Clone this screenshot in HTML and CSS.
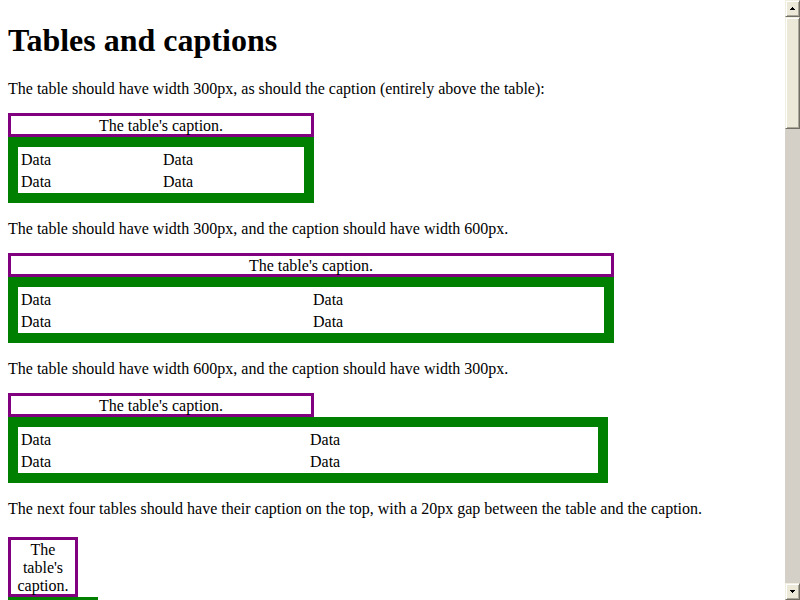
FILE: index.html
```html
<!DOCTYPE html>
<html lang="en">
<head>
<meta charset="utf-8">
<title>Tables and captions</title>
<link rel="stylesheet" href="styles.css">
</head>
<body>
<main class="page">
  <h1>Tables and captions</h1>

  <p>The table should have width 300px, as should the caption (entirely above the table):</p>
  <table class="narrow">
    <caption class="caption-300">The table's caption.</caption>
    <tr><td>Data</td><td>Data</td></tr>
    <tr><td>Data</td><td>Data</td></tr>
  </table>

  <p>The table should have width 300px, and the caption should have width 600px.</p>
  <table class="stretched">
    <caption class="caption-600">The table's caption.</caption>
    <tr><td>Data</td><td>Data</td></tr>
    <tr><td>Data</td><td>Data</td></tr>
  </table>

  <p>The table should have width 600px, and the caption should have width 300px.</p>
  <table class="wide">
    <caption class="caption-300">The table's caption.</caption>
    <tr><td>Data</td><td>Data</td></tr>
    <tr><td>Data</td><td>Data</td></tr>
  </table>

  <p>The next four tables should have their caption on the top, with a 20px gap between the table and the caption.</p>
  <table class="spaced">
    <caption class="caption-small">The table's caption.</caption>
    <tr><td></td><td></td></tr>
    <tr><td></td><td></td></tr>
  </table>
</main>
<div class="scrollbar">
  <button class="arrow" type="button" aria-label="Scroll up">
    <svg width="5" height="3" viewBox="0 0 5 3" shape-rendering="crispEdges"><path d="M2 0h1v1h1v1h1v1H0V2h1V1h1z"/></svg>
  </button>
  <div class="thumb"></div>
  <div class="track"></div>
  <button class="arrow" type="button" aria-label="Scroll down">
    <svg width="5" height="3" viewBox="0 0 5 3" shape-rendering="crispEdges"><path d="M0 0h5v1H4v1H3v1H2V2H1V1H0z"/></svg>
  </button>
</div>
</body>
</html>
```
FILE: styles.css
```css
body {
  display: flex;
  height: 100vh;
  margin: 0;
  overflow: hidden;
  background: #fff;
  color: #000;
  font: 16px/18px "Liberation Serif", "Times New Roman", serif;
}

.page {
  flex: 1;
  min-width: 0;
  padding: 0 8px;
  overflow: hidden;
}

h1 {
  margin: 22px 0 21px;
  font-size: 32px;
  line-height: 37px;
}

p {
  margin: 17px 0 15px;
}

table {
  border: 10px solid green;
  border-spacing: 2px;
}

td {
  padding: 2px 1px 0;
}

caption {
  box-sizing: content-box;
  height: 17px;
  padding-top: 1px;
  border: 3px solid purple;
  text-align: center;
}

.narrow {
  width: 306px;
}

.stretched {
  width: 606px;
}

.wide {
  width: 600px;
}

.spaced {
  width: 90px;
  margin: 19px 0;
}

.caption-300 {
  width: 300px;
}

.caption-600 {
  width: 600px;
}

.caption-small {
  width: 64px;
  height: 53px;
}

.scrollbar {
  display: flex;
  flex-direction: column;
  width: 15px;
  background: #d4d0c8;
}

.arrow,
.thumb {
  box-sizing: border-box;
  flex: none;
  border: 1px solid;
  border-color: #f1efe2 #716f64 #716f64 #f1efe2;
  background: #ece9d8;
  box-shadow: inset 1px 1px #fff, inset -1px -1px #aca899;
}

.arrow {
  display: flex;
  align-items: center;
  justify-content: center;
  width: 100%;
  height: 17px;
  padding: 0;
  border-radius: 0;
}

.thumb {
  height: 112px;
}

.track {
  flex: 1;
}
```
